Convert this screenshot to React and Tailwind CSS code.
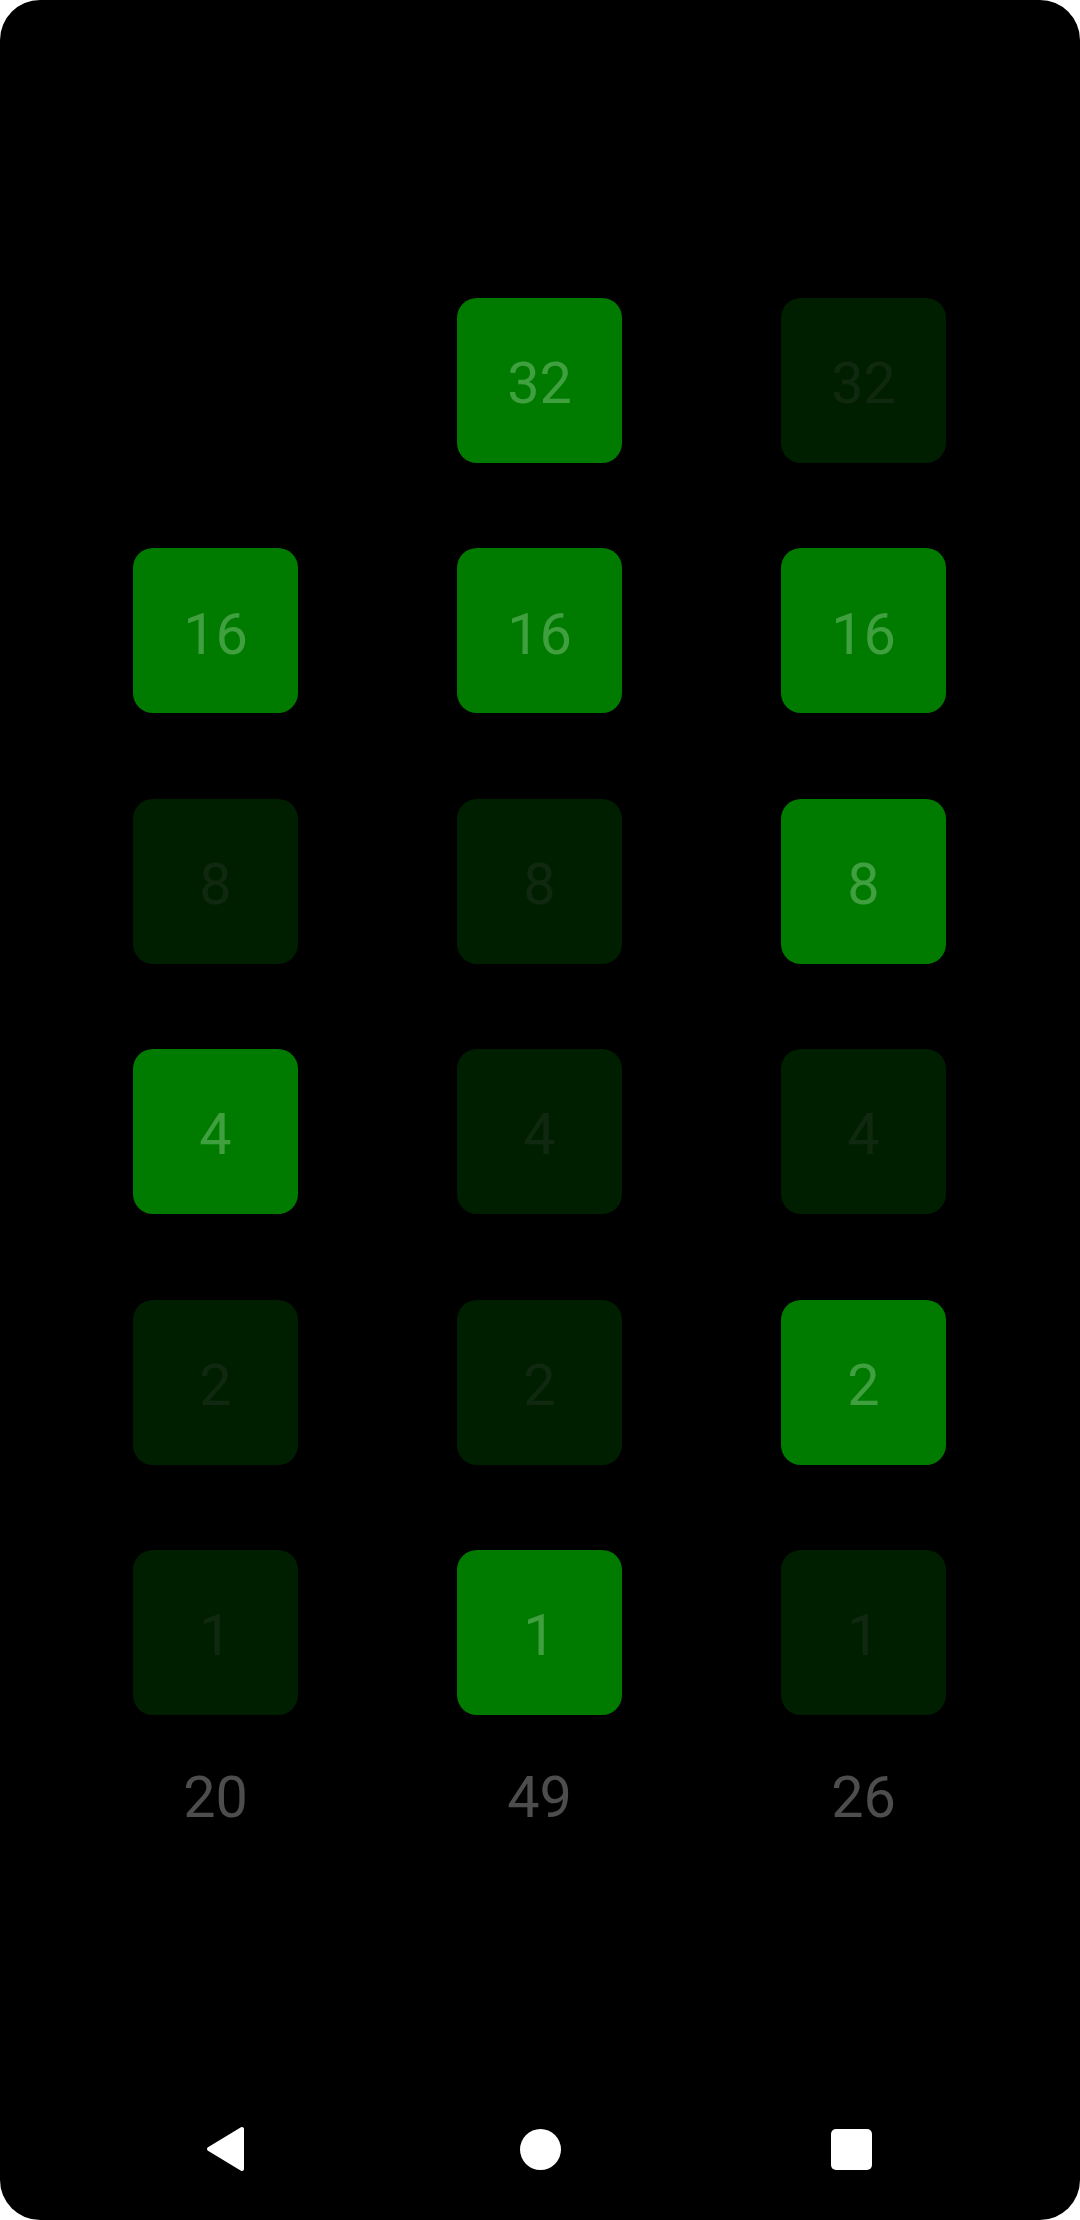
const columns = [
  { total: 20, bits: [null, true, false, true, false, false] },
  { total: 49, bits: [true, true, false, false, false, true] },
  { total: 26, bits: [false, true, true, false, true, false] },
];

const weights = [32, 16, 8, 4, 2, 1];

function Tile({ value, on }) {
  if (on === null) return <div className="h-[165px] w-[165px]" />;
  return (
    <div
      className={`flex h-[165px] w-[165px] items-center justify-center rounded-[20px] bg-[#007b00] pt-[7px] ${
        on ? "" : "opacity-25"
      }`}
    >
      <span className="text-[57.6px] leading-none text-[#40a040]">{value}</span>
    </div>
  );
}

export default function App() {
  return (
    <div className="bg-white" style={{ fontFamily: "Roboto, 'Liberation Sans', sans-serif" }}>
      <div className="relative flex h-[2220px] w-[1080px] flex-col overflow-hidden rounded-[40px] bg-black">
        <div className="flex gap-[159px] pl-[133px] pt-[298px]">
          {columns.map((col) => (
            <div key={col.total} className="flex w-[165px] flex-col items-center">
              <div className="flex flex-col gap-[85.4px]">
                {col.bits.map((on, i) => (
                  <Tile key={weights[i]} value={weights[i]} on={on} />
                ))}
              </div>
              <p className="mt-[54px] text-[57.6px] leading-none text-[#4d4d4d]">{col.total}</p>
            </div>
          ))}
        </div>

        <div className="mt-auto flex h-[132px] items-center pb-[10px] pl-[205px]">
          <svg width="41" height="48" viewBox="0 0 41 48">
            <path
              d="M37 4 L37 44 L4 24 Z"
              fill="white"
              stroke="white"
              strokeWidth="4"
              strokeLinejoin="round"
            />
          </svg>
          <div className="ml-[274px] h-[41px] w-[41px] rounded-full bg-white" />
          <div className="ml-[270px] h-[41px] w-[41px] rounded-[5px] bg-white" />
        </div>
      </div>
    </div>
  );
}
